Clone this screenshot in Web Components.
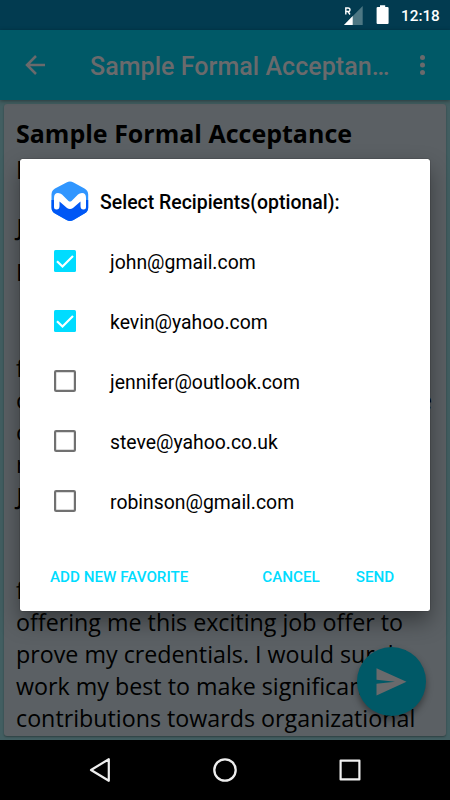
<!DOCTYPE html>
<html lang="en"><head><meta charset="utf-8"><title>Select Recipients</title>
<style>
html,body{margin:0;width:450px;height:800px;overflow:hidden;background:#000}
</style></head><body>
<mail-screen></mail-screen>
<script>
const define=(name,html)=>{
  const t=document.createElement('template');t.innerHTML=html;
  customElements.define(name,class extends HTMLElement{
    constructor(){super();this.attachShadow({mode:'open'}).append(t.content.cloneNode(true));}
  });
};
define('status-bar',`<style>
:host{display:flex;height:30px;background:#023b50;justify-content:flex-end;align-items:center;box-sizing:border-box;padding-right:10px;color:#fff;font:500 15.3px/30px Roboto,sans-serif}
svg{display:block}span{margin-left:12px;width:39px;white-space:nowrap;padding-top:1px}
</style><svg width="46" height="30" viewBox="0 0 46 30"><path d="M19.7 6V25H1Z" fill="#4d7783"/><path d="M9.7 16V25H1Z" fill="#fff"/><path d="M2.8 14.5V8H5Q7 8 7 9.8T5 11.5H3M5 11.5L7 14.5" fill="none" stroke="#fff" stroke-width="1.4"/><path d="M34.7 7H37V5.2H42.2V7H44.4Q45.6 7 45.6 8V23Q45.6 24 44.6 24H34.6Q33.6 24 33.6 23V8Q33.6 7 34.7 7Z" fill="#fff"/></svg><span>12:18</span>`);
define('app-bar',`<style>
:host{display:flex;height:70px;background:#005967;align-items:center;box-sizing:border-box;padding:0 20px 0 25px;color:#6a6a6c;box-shadow:0 1px 4px #0006;position:relative}
svg{flex:none;display:block}
h1{font:500 25px/30px Roboto,sans-serif;letter-spacing:.05px;margin:4px 0 0 45px;width:304px;white-space:nowrap;flex:none}
.more{margin-left:22px}
</style><svg width="20" height="20" viewBox="0 0 20 20" fill="none" stroke="currentColor" stroke-width="2.5"><path d="M20 10H2.2M11 1L2 10L11 19"/></svg><h1>Sample Formal Acceptan…</h1><svg class="more" width="20" height="20" viewBox="0 0 20 20" fill="currentColor"><circle cx="6.5" cy="2.5" r="2.5"/><circle cx="6.5" cy="10" r="2.5"/><circle cx="6.5" cy="17.5" r="2.5"/></svg>`);
define('letter-card',`<style>
:host{display:block;height:640px;background:#425e61;box-sizing:border-box;padding:4px;overflow:hidden}
article{box-sizing:border-box;height:632px;border-radius:3px;background:#5b6064;color:#000;padding:13px 0 0 12px;font:23.25px/32px "Open Sans",sans-serif;box-shadow:0 1px 2px #0005;white-space:nowrap}
</style><article><slot></slot></article>`);
define('letter-line',`<style>:host{display:flex;height:32px;line-height:32px;margin-top:var(--space,0)}:host([bold]){font-weight:700;font-size:25px}:host([split]){width:416px;justify-content:space-between}:host([inset]){padding-left:.5px;font-weight:600}</style><slot></slot>`);
define('send-fab',`<style>
:host{position:absolute;left:356.5px;top:646.5px;width:69.5px;height:69.5px;border-radius:50%;background:#005967;box-shadow:0 4px 7px #0006}
svg{display:block}</style><svg width="69.5" height="69.5" viewBox="0 0 69.5 69.5"><path d="M19.5 21.2L49.5 34.8L19.5 48.5V36.8L38 34.8L19.5 32.8Z" fill="#6a6a6c"/></svg>`);
define('recipient-row',`<style>
:host{display:flex;height:60px;align-items:center;padding-left:34px;color:#000;font:19.4px/30px Roboto,sans-serif}
svg{display:block;margin:0 34px 1px 0;flex:none}span{padding-top:2px}.on{display:none}:host([checked]) .on{display:block}:host([checked]) .off{display:none}
</style><svg width="22" height="22" viewBox="0 0 22 22"><rect class="off" x="1.1" y="1.1" width="19.8" height="19.8" rx="1" fill="none" stroke="#717171" stroke-width="2.2"/><g class="on"><rect width="22" height="22" rx="1.5" fill="#00dcff"/><path d="M3 11.2L8.5 16.5L19 6" fill="none" stroke="#fff" stroke-width="2.2"/></g></svg><span><slot></slot></span>`);
define('app-logo',`<style>:host{display:block;width:38px;height:42px}svg{display:block}</style>
<svg width="38" height="42" viewBox="0 0 38 42"><defs><clipPath id="h"><path d="M15.5 1.5Q19 -.5 22.5 1.5L33.5 7.5Q37.2 9.5 37.2 13.5V26.5Q37.2 30.5 33.5 32.5L22.5 39Q19 41 15.5 39L4 32.5Q.5 30.5 .5 26.5V13.5Q.5 9.5 4 7.5Z"/></clipPath></defs><g clip-path="url(#h)"><path fill="#3096ff" d="M0 0H38V42H0Z"/><path fill="#0057f5" d="M0 19H6L19 25L32 19H38V42H0Z"/></g><path d="M3 26V17Q3 12 7 12Q9.5 12 11 13.5L17.5 20Q19 21.2 20.5 20L27 13.5Q28.5 12 31 12Q35 12 35 17V26Q35 28.5 32.5 28.5Q29.5 28.5 29.5 25V20.5L22 27Q19 29.2 16 27L8.5 20.5V25Q8.5 28.5 5.5 28.5Q3 28.5 3 26Z" fill="#fff"/></svg>`);
define('recipient-dialog',`<style>
:host{position:absolute;left:20px;top:158.5px;width:410px;height:452.5px;background:#fff;border-radius:2.5px;box-shadow:0 10px 22px #0006,0 0 1px #000}
header{display:flex;height:73px;box-sizing:border-box;padding:22px 0 0 31px;color:#000}
h2{margin:7px 0 0 11px;font:500 19.45px/30px Roboto,sans-serif}
footer{display:flex;margin-top:30px;height:30px;padding-left:30px;color:#00dcff;font:500 15.2px/30px Roboto,sans-serif}
footer span:nth-child(2){margin-left:74px}footer span:nth-child(3){margin-left:36px}
</style><header><app-logo></app-logo><h2><slot name="title"></slot></h2></header><slot></slot><footer><span>ADD NEW FAVORITE</span><span>CANCEL</span><span>SEND</span></footer>`);
define('nav-bar',`<style>:host{display:grid;grid-template-columns:repeat(3,125px);justify-content:center;height:60px;align-items:center;justify-items:center;background:#000}svg{display:block}</style>
<svg width="26" height="26" fill="none" stroke="#eee" stroke-width="2.2" stroke-linejoin="round"><path d="M21.8 2.2V23.8L4 13Z"/></svg><svg width="26" height="26" fill="none" stroke="#eee" stroke-width="2.3"><circle cx="13" cy="13" r="10.7"/></svg><svg width="26" height="26" fill="none" stroke="#eee" stroke-width="2.2" stroke-linejoin="round"><rect x="3.6" y="3.6" width="18.8" height="18.8"/></svg>`);
define('mail-screen',`<style>:host{display:block;position:relative;width:450px;height:800px;overflow:hidden}</style>
<status-bar></status-bar><app-bar></app-bar>
<letter-card>
<letter-line bold>Sample Formal Acceptance</letter-line>
<letter-line bold style="--space:4px">Letter</letter-line>
<letter-line inset style="--space:26px">J</letter-line>
<letter-line style="--space:13px">D</letter-line>
<letter-line style="--space:64px">f</letter-line>
<letter-line split><span>o</span><span>e</span></letter-line>
<letter-line>o</letter-line>
<letter-line>r</letter-line>
<letter-line inset>J</letter-line>
<letter-line style="--space:62px">f</letter-line>
<letter-line>offering me this exciting job offer to</letter-line>
<letter-line>prove my credentials. I would surely</letter-line>
<letter-line>work my best to make significant</letter-line>
<letter-line>contributions towards organizational</letter-line>
</letter-card>
<nav-bar></nav-bar><send-fab></send-fab>
<recipient-dialog><span slot="title">Select Recipients(optional):</span>
<recipient-row checked>john@gmail.com</recipient-row><recipient-row checked>kevin@yahoo.com</recipient-row><recipient-row>jennifer@outlook.com</recipient-row><recipient-row>steve@yahoo.co.uk</recipient-row><recipient-row>robinson@gmail.com</recipient-row></recipient-dialog>`);
</script></body></html>
